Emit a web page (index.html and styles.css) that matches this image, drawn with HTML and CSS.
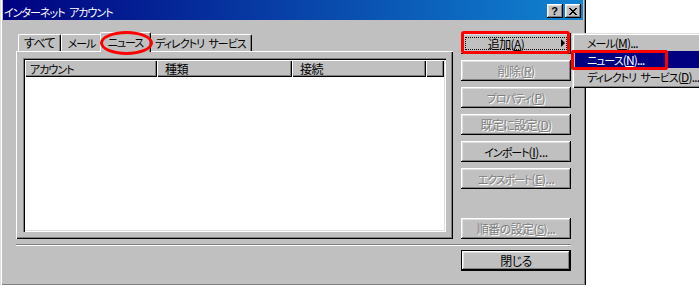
FILE: index.html
```html
<!DOCTYPE html>
<html lang="ja">
<head>
<meta charset="utf-8">
<title>インターネット アカウント</title>
<link rel="stylesheet" href="styles.css">
</head>
<body>
<div class="dialog">
  <div class="titlebar">
    <span class="title kana">インターネット アカウント</span>
    <div class="tb-buttons">
      <span class="tb-btn help">?</span>
      <span class="tb-btn close"><svg width="8" height="7" viewBox="0 0 8 7"><path d="M0 0h2v1h-2zM6 0h2v1h-2zM1 1h2v1h-2zM5 1h2v1h-2zM2 2h4v1h-4zM3 3h2v1h-2zM2 4h4v1h-4zM1 5h2v1h-2zM5 5h2v1h-2zM0 6h2v1h-2zM6 6h2v1h-2z" fill="#000"/></svg></span>
    </div>
  </div>
  <div class="main">
    <div class="left">
      <div class="tabs">
        <div class="tab t1">すべて</div>
        <div class="tab t2 kana">メール</div>
        <div class="tab t3 kana active">ニュース</div>
        <div class="tab t4 kana">ディレクトリ サービス</div>
      </div>
      <div class="panel">
        <div class="listbox">
          <div class="header">
            <div class="col c1 kana">アカウント</div>
            <div class="col c2">種類</div>
            <div class="col c3">接続</div>
            <div class="col c4"></div>
          </div>
        </div>
      </div>
    </div>
    <div class="right">
      <div class="btn add focus"><span class="lbl">追加(<u>A</u>)</span><span class="arrow"></span></div>
      <div class="btn disabled">削除(<u>R</u>)</div>
      <div class="btn disabled kana">プロパティ<span class="lat">(<u>P</u>)</span></div>
      <div class="btn disabled">既定に設定(<u>D</u>)</div>
      <div class="btn kana">インポート<span class="lat">(<u>I</u>)...</span></div>
      <div class="btn disabled kana">エクスポート<span class="lat">(<u>E</u>)...</span></div>
      <div class="btn disabled order">順番の設定(<u>S</u>)...</div>
    </div>
  </div>
  <div class="sep"></div>
  <div class="footer">
    <div class="btn default">閉じる</div>
  </div>
</div>

<div class="menu kana">
  <div class="item">メール<span class="lat">(<u>M</u>)...</span></div>
  <div class="item selected">ニュース<span class="lat">(<u>N</u>)...</span></div>
  <div class="item">ディレクトリ サービス<span class="lat">(<u>D</u>)...</span></div>
</div>

<div class="mark ring"></div>
<div class="mark box-add"></div>
<div class="mark box-news"></div>
</body>
</html>
```

FILE: styles.css
```css
* { box-sizing: border-box; }
html, body { margin: 0; padding: 0; }
body {
  width: 699px;
  height: 285px;
  overflow: hidden;
  position: relative;
  background: #fff;
  color: #000;
  font-family: "Noto Sans CJK JP", "DejaVu Sans", sans-serif;
  font-size: 12px;
  font-feature-settings: "palt";
  letter-spacing: -0.6px;
  line-height: 14px;
}
.kana { font-size: 11px; letter-spacing: -1px; word-spacing: 3px; }
.kana .lat { font-size: 12px; letter-spacing: -0.4px; }
u { text-decoration: underline; text-underline-offset: 1px; }

.dialog {
  width: 586px;
  height: 286px;
  background: #c0c0c0;
  padding: 0 3px 3px 3px;
  box-shadow: inset 1px 0 #dfdfdf, inset 2px 0 #fff, inset -1px -1px #000, inset -2px -2px #808080;
  display: flex;
  flex-direction: column;
}

.titlebar {
  height: 20px;
  background: linear-gradient(to right, #000080, #1084d0);
  display: flex;
  align-items: center;
  padding: 3px 2px 0 1px;
  color: #fff;
}
.title { flex: 1; white-space: nowrap; }
.tb-buttons { display: flex; gap: 2px; align-self: flex-end; margin-bottom: 2px; }
.tb-btn {
  width: 16px;
  height: 14px;
  background: #c0c0c0;
  box-shadow: inset -1px -1px #000, inset 1px 1px #fff, inset -2px -2px #808080, inset 2px 2px #dfdfdf;
  display: flex;
  align-items: center;
  justify-content: center;
  color: #000;
  letter-spacing: 0;
}
.help { font-family: "Liberation Sans", sans-serif; font-weight: bold; font-size: 11px; line-height: 11px; padding-right: 1px; }
.close svg { display: block; margin-left: -1px; }

.main {
  display: flex;
  padding: 12px 0 0 13px;
}
.left { width: 437px; display: flex; flex-direction: column; }
.tabs {
  height: 19px;
  display: flex;
  align-items: flex-end;
  padding-left: 2px;
  position: relative;
  z-index: 1;
}
.tab {
  height: 17px;
  background: #c0c0c0;
  border: 1px solid;
  border-color: #fff #000 transparent #fff;
  border-bottom: none;
  border-radius: 2px 2px 0 0;
  box-shadow: inset -1px 0 #808080;
  text-align: center;
  padding-top: 1px;
  white-space: nowrap;
}
.t1 { width: 43px; }
.t2 { width: 41px; }
.t3 { width: 47px; }
.t4 { width: 103px; text-align: left; padding-left: 5px; }
.tab.active {
  height: 20px;
  width: 51px;
  margin: 0 -2px -1px -2px;
  position: relative;
  z-index: 2;
  padding-top: 2px;
}

.panel {
  height: 188px;
  background: #c0c0c0;
  box-shadow: inset 1px 1px #fff, inset -1px -1px #000, inset -2px -2px #808080;
  padding: 7px;
}
.listbox {
  height: 100%;
  background: #fff;
  box-shadow: inset 1px 1px #808080, inset 2px 2px #000, inset -1px -1px #fff, inset -2px -2px #dfdfdf;
  padding: 2px;
}
.header { display: flex; height: 17px; }
.col {
  background: #c0c0c0;
  box-shadow: inset 1px 1px #fff, inset -1px -1px #000, inset -2px -2px #808080;
  padding: 2px 0 0 5px;
  height: 17px;
  white-space: nowrap;
}
.c1 { width: 132px; }
.c2 { width: 135px; padding-left: 8px; }
.c3 { width: 134px; padding-left: 8px; }
.c4 { flex: 1; }

.right {
  width: 110px;
  margin-left: 8px;
  padding-top: 1px;
  display: flex;
  flex-direction: column;
  gap: 6px;
}
.btn {
  width: 110px;
  height: 21px;
  background: #c0c0c0;
  box-shadow: inset -1px -1px #000, inset 1px 1px #fff, inset -2px -2px #808080, inset 2px 2px #dfdfdf;
  display: flex;
  align-items: center;
  justify-content: center;
  white-space: nowrap;
  position: relative;
}
.btn.disabled { color: #808080; text-shadow: 1px 1px #fff; }
.btn.order { margin-top: auto; }
.btn.add { padding-right: 20px; }
.btn.focus::after {
  content: "";
  position: absolute;
  left: 4px; top: 4px; right: 4px; bottom: 4px;
  border: 1px dotted #000;
}
.arrow {
  position: absolute;
  right: 6px;
  top: 6px;
  width: 0; height: 0;
  border-top: 4px solid transparent;
  border-bottom: 4px solid transparent;
  border-left: 4px solid #000;
}
.btn.default {
  box-shadow: inset 0 0 0 1px #000, inset -2px -2px #000, inset 2px 2px #fff, inset -3px -3px #808080, inset 3px 3px #dfdfdf;
}

.sep {
  height: 2px;
  margin: 5px 12px 0 13px;
  border-top: 1px solid #808080;
  border-bottom: 1px solid #fff;
}
.footer {
  display: flex;
  justify-content: flex-end;
  padding: 4px 12px 0 0;
}

.menu {
  position: absolute;
  z-index: 5;
  left: 572px;
  top: 33px;
  width: 140px;
  height: 55px;
  background: #c0c0c0;
  box-shadow: inset 1px 1px #dfdfdf, inset 2px 2px #fff, inset -1px -1px #000, inset -2px -2px #808080;
  padding: 1px 3px;
}
.menu .lat { letter-spacing: -0.8px; }
.item {
  height: 17px;
  padding: 2px 0 0 12px;
  white-space: nowrap;
}
.item.selected { background: #000080; color: #fff; }

.mark { position: absolute; z-index: 10; border: 3px solid #f00; }
.ring { left: 100px; top: 31px; width: 53px; height: 24px; border-radius: 50%; border-width: 3px; }
.box-add { left: 461px; top: 31px; width: 109px; height: 23px; border-radius: 3px; }
.box-news { left: 571px; top: 50px; width: 97px; height: 20px; border-radius: 2px; }
```
